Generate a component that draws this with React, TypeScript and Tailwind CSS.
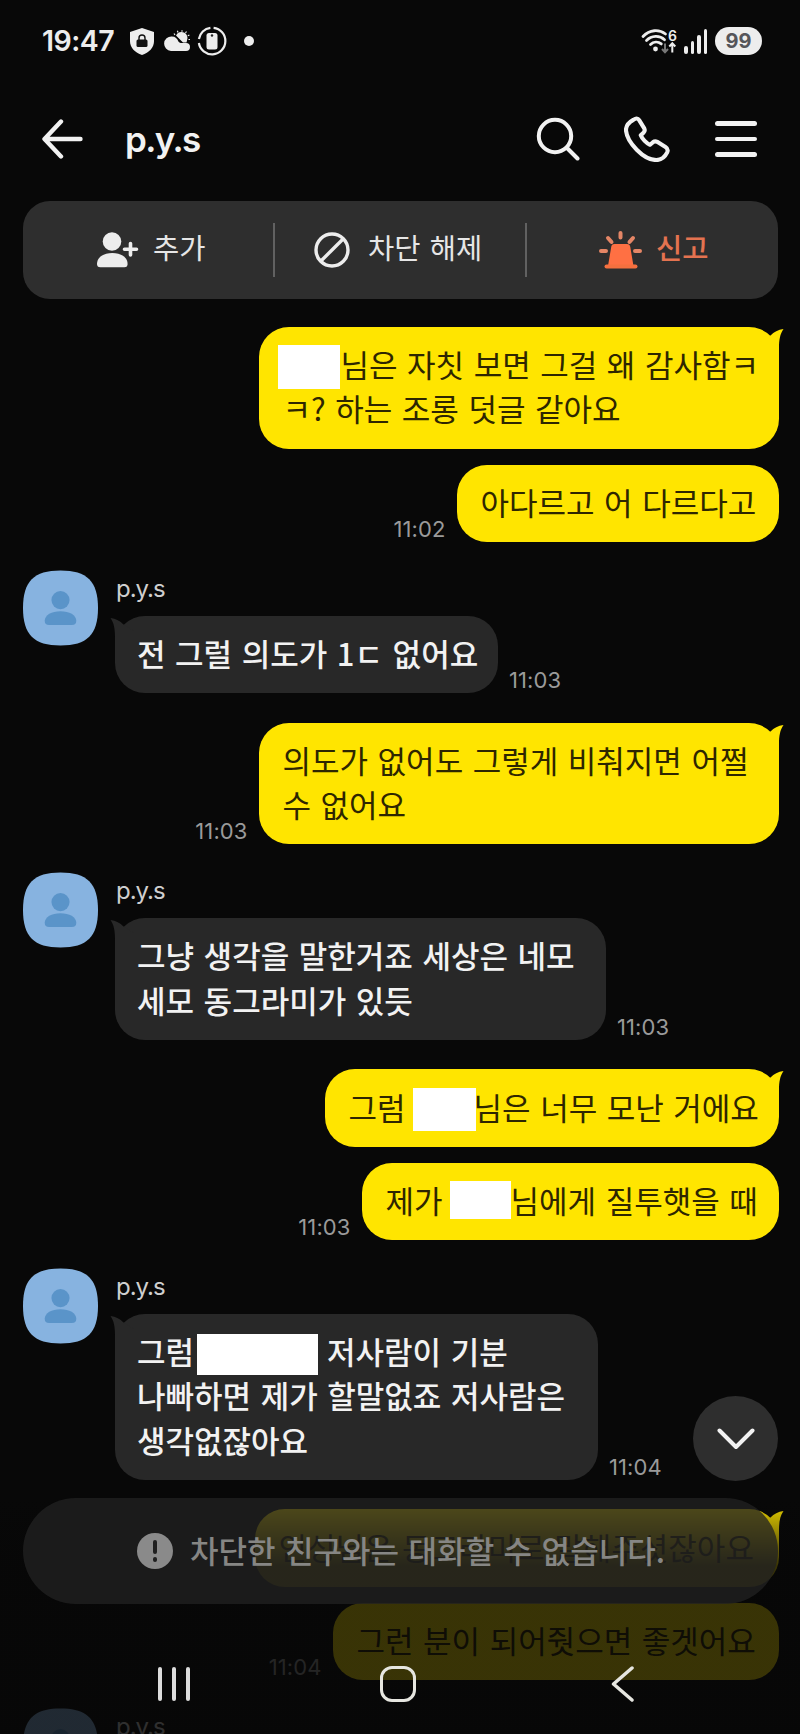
import type { ReactNode } from "react";

interface Redaction {
  box: string;
}

type Part = string | Redaction;

interface Message {
  lines: Part[][];
  width: string;
  time?: string;
}

interface Group {
  mine: boolean;
  messages: Message[];
}

const groups: Group[] = [
  {
    mine: true,
    messages: [
      {
        width: "w-[520px]",
        lines: [
          [{ box: "w-[62px] h-[44px] -ml-[5px] mr-[1px] mt-[2px]" }, "님은 자칫 보면 그걸 왜 감사함ㅋ"],
          ["ㅋ? 하는 조롱 덧글 같아요"],
        ],
      },
      { width: "w-[322px]", lines: [["아다르고 어 다르다고"]], time: "11:02" },
    ],
  },
  {
    mine: false,
    messages: [{ width: "w-[383px]", lines: [["전 그럴 의도가 1ㄷ 없어요"]], time: "11:03" }],
  },
  {
    mine: true,
    messages: [
      {
        width: "w-[520px]",
        lines: [["의도가 없어도 그렇게 비춰지면 어쩔"], ["수 없어요"]],
        time: "11:03",
      },
    ],
  },
  {
    mine: false,
    messages: [
      {
        width: "w-[491px]",
        lines: [["그냥 생각을 말한거죠 세상은 네모"], ["세모 동그라미가 있듯"]],
        time: "11:03",
      },
    ],
  },
  {
    mine: true,
    messages: [
      {
        width: "w-[454px]",
        lines: [["그럼", { box: "w-[63px] h-[43px] ml-[7px] -mr-[2px] mt-[3px]" }, "님은 너무 모난 거에요"]],
      },
      {
        width: "w-[417px]",
        lines: [["제가", { box: "w-[61px] h-[38px] ml-[7px] mr-0 -mt-[2px]" }, "님에게 질투햇을 때"]],
        time: "11:03",
      },
    ],
  },
  {
    mine: false,
    messages: [
      {
        width: "w-[483px]",
        lines: [
          ["그럼", { box: "w-[121px] h-[41px] ml-[3px] mr-[9px] mt-[3px]" }, "저사람이 기분"],
          ["나빠하면 제가 할말없죠 저사람은"],
          ["생각없잖아요"],
        ],
        time: "11:04",
      },
    ],
  },
  {
    mine: true,
    messages: [
      { width: "w-[524px]", lines: [["인성님은 동그라미로 말해주셧잖아요"]] },
      { width: "w-[446px]", lines: [["그런 분이 되어줫으면 좋겟어요"]], time: "11:04" },
    ],
  },
  { mine: false, messages: [{ width: "w-[300px]", lines: [["네"]] }] },
];

function StatusBar() {
  return (
    <div className="h-[82px] pl-[42px] pr-[38px] flex items-center text-[#ededed]">
      <span className="w-[88px] font-['Inter',sans-serif] text-[28.500px] leading-none font-semibold tracking-[-0.5px]">
        19:47
      </span>
      <svg width="24" height="27" viewBox="0 0 24 27">
        <path d="M12 0l12 4v9c0 7-5 11.500-12 14C5 24.500 0 20 0 13V4z" fill="#ededed" />
        <rect x="6.500" y="11.500" width="11" height="7.500" rx="1.500" fill="#111" />
        <path d="M9 12v-2a3 3 0 0 1 6 0v2" fill="none" stroke="#111" strokeWidth="1.400" />
      </svg>
      <svg className="ml-[10px]" width="26" height="22" viewBox="0 0 26 22">
        <path
          d="M11 5l-1-1.500M14 2.500l-.6-1.700M18 1.800V.2M21.500 3l1-1.500M23.800 5.800l1.600-.9M24.500 9.500h1.500"
          stroke="#ededed"
          strokeWidth="1.200"
        />
        <path d="M12 5.500a6 6 0 0 1 11 5l-.5 2h-3.500z" fill="#ededed" />
        <path
          d="M7 21a6.800 6.800 0 1 1 .8-14.500c3.600 0 5.600 2 6.600 5 1 1 2 1.500 3.600 1.500h4a4 4 0 0 1 0 8z"
          fill="#ededed"
        />
      </svg>
      <svg className="ml-[7px]" width="30" height="30" viewBox="0 0 30 30">
        {/* ring with small gaps at the top and on the left */}
        <g fill="none" stroke="#ededed" strokeWidth="2.200">
          <path d="M16.600 1.800A13.300 13.300 0 1 1 1.900 17" />
          <path d="M1.900 13A13.300 13.300 0 0 1 13.400 1.800" />
        </g>
        <rect x="9.500" y="7" width="11" height="16.500" rx="2.500" fill="#ededed" />
        <circle cx="15" cy="9.500" r="1.200" fill="#222" />
      </svg>
      <span className="ml-[17px] size-[10px] rounded-full bg-[#ededed]" />

      <svg className="ml-auto" width="36" height="27" viewBox="0 0 36 27">
        <g fill="none" stroke="#ededed" strokeWidth="2.800" strokeLinecap="round">
          <path d="M2 8.500C8.500 1.500 18 1 24.500 6" />
          <path d="M5.500 12.500c5-5 13-5.500 18-.8" />
          <path d="M9.500 16.500c3-3 7.500-3.300 10.800-.6" />
        </g>
        <circle cx="14.500" cy="21" r="2.400" fill="#ededed" />
        <path d="M24 15.500v8.500m-3-3l3 3.200 3-3.200" fill="none" stroke="#777" strokeWidth="2" />
        <path d="M31.300 24.500V15.500m-3 3l3-3.200 3 3.200" fill="none" stroke="#ededed" strokeWidth="2" />
        <text x="27" y="12.500" fill="#ededed" fontSize="14" fontWeight="600" fontFamily="Inter, sans-serif">
          6
        </text>
      </svg>
      <div className="ml-[7px] h-[25px] flex items-end gap-[3px]">
        <span className="w-[3.500px] h-[8px] rounded-full bg-[#ededed]" />
        <span className="w-[3.500px] h-[13px] rounded-full bg-[#ededed]" />
        <span className="w-[3.500px] h-[19px] rounded-full bg-[#ededed]" />
        <span className="w-[3.500px] h-[25px] rounded-full bg-[#ededed]" />
      </div>
      <span className="ml-[8px] w-[47px] h-[28px] rounded-full bg-[#ededed] flex items-center justify-center font-['Inter',sans-serif] text-[20px] font-bold leading-none text-[#55555a]">
        99
      </span>
    </div>
  );
}

function Header() {
  return (
    <div className="h-[119px] pl-[42px] pr-[43px] flex items-center text-white">
      <svg className="mb-[5px]" width="41" height="40" viewBox="0 0 41 40">
        <path
          d="M19 2.500L2.500 20 19 37.500M3 20h35.500"
          fill="none"
          stroke="#f2f2f2"
          strokeWidth="4.400"
          strokeLinecap="round"
          strokeLinejoin="round"
        />
      </svg>
      <h1 className="ml-[42px] mb-[4px] font-['Inter',sans-serif] text-[35px] leading-none font-semibold tracking-[-1.600px] text-[#f2f2f2]">
        p.y.s
      </h1>
      <svg className="ml-auto mb-[5px]" width="44" height="44" viewBox="0 0 44 44">
        <g fill="none" stroke="#f2f2f2" strokeWidth="4" strokeLinecap="round">
          <circle cx="19" cy="19" r="16.200" />
          <path d="M31 31l10.500 10.500" />
        </g>
      </svg>
      <svg className="ml-[44px] mb-[5px]" width="46" height="46" viewBox="0 0 47 47">
        <path
          d="M9.500 4C5 6.500 2 10 2 14.500 3 27 20 45 33 45c5.500 0 9-3.500 11-7.500 1.200-2.600.4-4.600-1.600-5.800l-8.500-5.300c-1.500-.8-3-.6-4.300.4l-3 2.600c-3.500-1.500-8-6-9.500-9.800l2.800-2.600c1.400-1.300 1.600-2.700.8-4.300L15.500 4.200C14 1.800 12 2.300 9.500 4z"
          fill="none"
          stroke="#f2f2f2"
          strokeWidth="4.200"
          strokeLinejoin="round"
        />
      </svg>
      <div className="ml-[45px] mb-[5px] w-[42px] flex flex-col gap-[11px]">
        <span className="h-[4.500px] rounded-full bg-[#f2f2f2]" />
        <span className="h-[4.500px] rounded-full bg-[#f2f2f2]" />
        <span className="h-[4.500px] rounded-full bg-[#f2f2f2]" />
      </div>
    </div>
  );
}

function ActionBar() {
  return (
    <div className="ml-[23px] mr-[22px] h-[98px] rounded-[27px] bg-[#2e2e2e] flex items-center text-[28.500px] leading-none text-[#e6e6e6] whitespace-nowrap">
      <div className="w-[250px] pl-[74px] flex items-center">
        <svg width="42" height="36" viewBox="0 0 42 36">
          <circle cx="15" cy="9.500" r="9.300" fill="#ededed" />
          <path d="M0 32c0-7 7-11 15.300-11s15.300 4 15.300 11c0 2-1 3.300-3.300 3.300h-24C1 35.300 0 34 0 32z" fill="#ededed" />
          <path d="M33.500 11.500v11.500M27.500 17.300h12" stroke="#ededed" strokeWidth="3.600" strokeLinecap="round" />
        </svg>
        <span className="ml-[14px] mb-[6px]">추가</span>
      </div>
      <span className="w-[2px] h-[54px] bg-[#616161]" />
      <div className="w-[250px] pl-[39px] flex items-center">
        <svg width="36" height="36" viewBox="0 0 36 36">
          <g fill="none" stroke="#ededed" strokeWidth="3.400">
            <circle cx="18" cy="18" r="16" />
            <path d="M29.300 6.700L6.700 29.300" />
          </g>
        </svg>
        <span className="ml-[18px] mb-[6px] [word-spacing:3px]">차단 해제</span>
      </div>
      <span className="w-[2px] h-[54px] bg-[#616161]" />
      <div className="pl-[72px] flex items-center text-[#e47350]">
        <svg width="43" height="38" viewBox="0 0 43 38">
          <path
            d="M21.500 2v4.500M9 7l3.500 4M34 7l-3.500 4M2 20h5M36 20h5"
            stroke="#e58666"
            strokeWidth="4"
            strokeLinecap="round"
          />
          <path d="M15.500 13h12.500c2 0 3 1 3.300 3l3.200 19H9l3.200-19c.3-2 1.300-3 3.300-3z" fill="#ff7043" />
          <path d="M7.500 35.500h29" stroke="#f5703f" strokeWidth="4" strokeLinecap="round" />
        </svg>
        <span className="ml-[14px] mb-[6px] font-medium">신고</span>
      </div>
    </div>
  );
}

function Avatar() {
  return (
    <svg className="shrink-0" width="75" height="76" viewBox="0 0 76 76">
      <path d="M38 0C65 0 76 11 76 38S65 76 38 76 0 65 0 38 11 0 38 0z" fill="#87b3e0" />
      <circle cx="38" cy="30" r="9.200" fill="#5a94c9" />
      <path d="M22 51c0-6 7-9.800 16-9.800S54 45 54 51c0 3-1.500 4.300-4.500 4.300h-23C23.500 55.300 22 54 22 51z" fill="#5a94c9" />
    </svg>
  );
}

function Bubble({ message, mine, tail }: { message: Message; mine: boolean; tail: boolean }) {
  const tone = mine ? "bg-[#ffe500] text-[#2e2600] pl-[24px]" : "bg-[#282828] text-[#f2f2f2] font-medium pl-[22px]";
  return (
    <div className={`relative shrink-0 py-[16.500px] rounded-[30px] ${message.width} ${tone}`}>
      {tail && (
        <svg
          className={`absolute top-[1px] ${mine ? "right-[-5px]" : "left-[-5px] -scale-x-100"}`}
          width="24"
          height="32"
          viewBox="0 0 24 32"
        >
          <path d="M23.500 1C18 1.500 14 4 10.500 7.500L0 14v18h19V20C19 12 20 6 23.500 1z" fill={mine ? "#ffe500" : "#282828"} />
        </svg>
      )}
      {message.lines.map((line, i) => (
        <div key={i} className="relative h-[44.300px] flex items-center whitespace-pre text-[31px] leading-none [word-spacing:2.600px]">
          {line.map((part, j) =>
            typeof part === "string" ? (
              <span key={j} className="mb-[4px]">{part}</span>
            ) : (
              <span key={j} className={`shrink-0 bg-white ${part.box}`} />
            )
          )}
        </div>
      ))}
    </div>
  );
}

function Time({ children }: { children: ReactNode }) {
  return (
    <span className="mb-px font-['Inter',sans-serif] text-[22px] leading-[24px] text-[#9a9a9a] tracking-[0.100px]">
      {children}
    </span>
  );
}

function MessageGroup({ group }: { group: Group }) {
  if (group.mine) {
    return (
      <div className="pr-[21.500px] flex flex-col items-end gap-[16px]">
        {group.messages.map((message, i) => (
          <div key={i} className="flex items-end gap-[11px]">
            {message.time && <Time>{message.time}</Time>}
            <Bubble message={message} mine tail={i === 0} />
          </div>
        ))}
      </div>
    );
  }
  return (
    <div className="pl-[23px] mt-[28px] mb-[29.500px] flex items-start">
      <Avatar />
      <div className="ml-[17px]">
        <p className="h-[46px] pt-[5px] pl-[1px] font-['Inter',sans-serif] text-[24px] leading-[28px] tracking-[-1px] text-[#cfcfcf]">
          p.y.s
        </p>
        {group.messages.map((message, i) => (
          <div key={i} className="flex items-end gap-[11px]">
            <Bubble message={message} mine={false} tail={i === 0} />
            {message.time && <Time>{message.time}</Time>}
          </div>
        ))}
      </div>
    </div>
  );
}

function BlockedNotice() {
  return (
    <div className="ml-[23px] mr-[22px] h-[106px] rounded-full bg-[#222222]/77 flex items-center pl-[114px] text-[#868684]">
      <span className="size-[36px] rounded-full bg-[#8a8a8a] flex flex-col items-center justify-center gap-[3px]">
        <span className="w-[4.500px] h-[14px] rounded-full bg-[#1f1f1f]" />
        <span className="size-[4.500px] rounded-full bg-[#1f1f1f]" />
      </span>
      <span className="ml-[17px] mb-[3px] whitespace-nowrap text-[31px] leading-none font-medium [word-spacing:2.500px]">
        차단한 친구와는 대화할 수 없습니다.
      </span>
    </div>
  );
}

function NavBar() {
  return (
    <div className="mt-[62px] h-[36px] pl-[158px] pr-[166px] flex items-center justify-between">
      <div className="flex gap-[10px]">
        <span className="w-[4px] h-[34px] rounded-full bg-[#dcdcdc]" />
        <span className="w-[4px] h-[34px] rounded-full bg-[#dcdcdc]" />
        <span className="w-[4px] h-[34px] rounded-full bg-[#dcdcdc]" />
      </div>
      <span className="mr-[5px] w-[36px] h-[36px] rounded-[12px] border-[3.500px] border-[#e6e6e0]" />
      <svg width="23" height="36" viewBox="0 0 23 36">
        <path d="M21 2L2.500 18 21 34" fill="none" stroke="#e6e6e0" strokeWidth="3.500" strokeLinecap="round" strokeLinejoin="round" />
      </svg>
    </div>
  );
}

export default function App() {
  return (
    <div className="relative w-[800px] h-[1734px] overflow-hidden bg-[#080808] font-['Noto_Sans_CJK_KR',sans-serif]">
      <StatusBar />
      <Header />
      <ActionBar />
      <div className="pt-[28px]">
        {groups.map((group, i) => (
          <MessageGroup key={i} group={group} />
        ))}
      </div>

      {/* fade over the bottom of the conversation */}
      <div className="absolute inset-x-0 bottom-0 h-[240px] bg-linear-to-b from-[#070707]/0 from-0% via-[#070707]/80 via-30% to-[#070707]/80" />

      <button className="absolute right-[22px] top-[1396px] size-[85px] rounded-full bg-[#2e2e2e] flex items-center justify-center">
        <svg className="mt-px" width="38" height="22" viewBox="0 0 38 22">
          <path d="M2.500 2.500L19 19 35.500 2.500" fill="none" stroke="#f2f2f2" strokeWidth="4" strokeLinecap="round" strokeLinejoin="round" />
        </svg>
      </button>

      <div className="absolute inset-x-0 top-[1498px]">
        <BlockedNotice />
        <NavBar />
      </div>
    </div>
  );
}
